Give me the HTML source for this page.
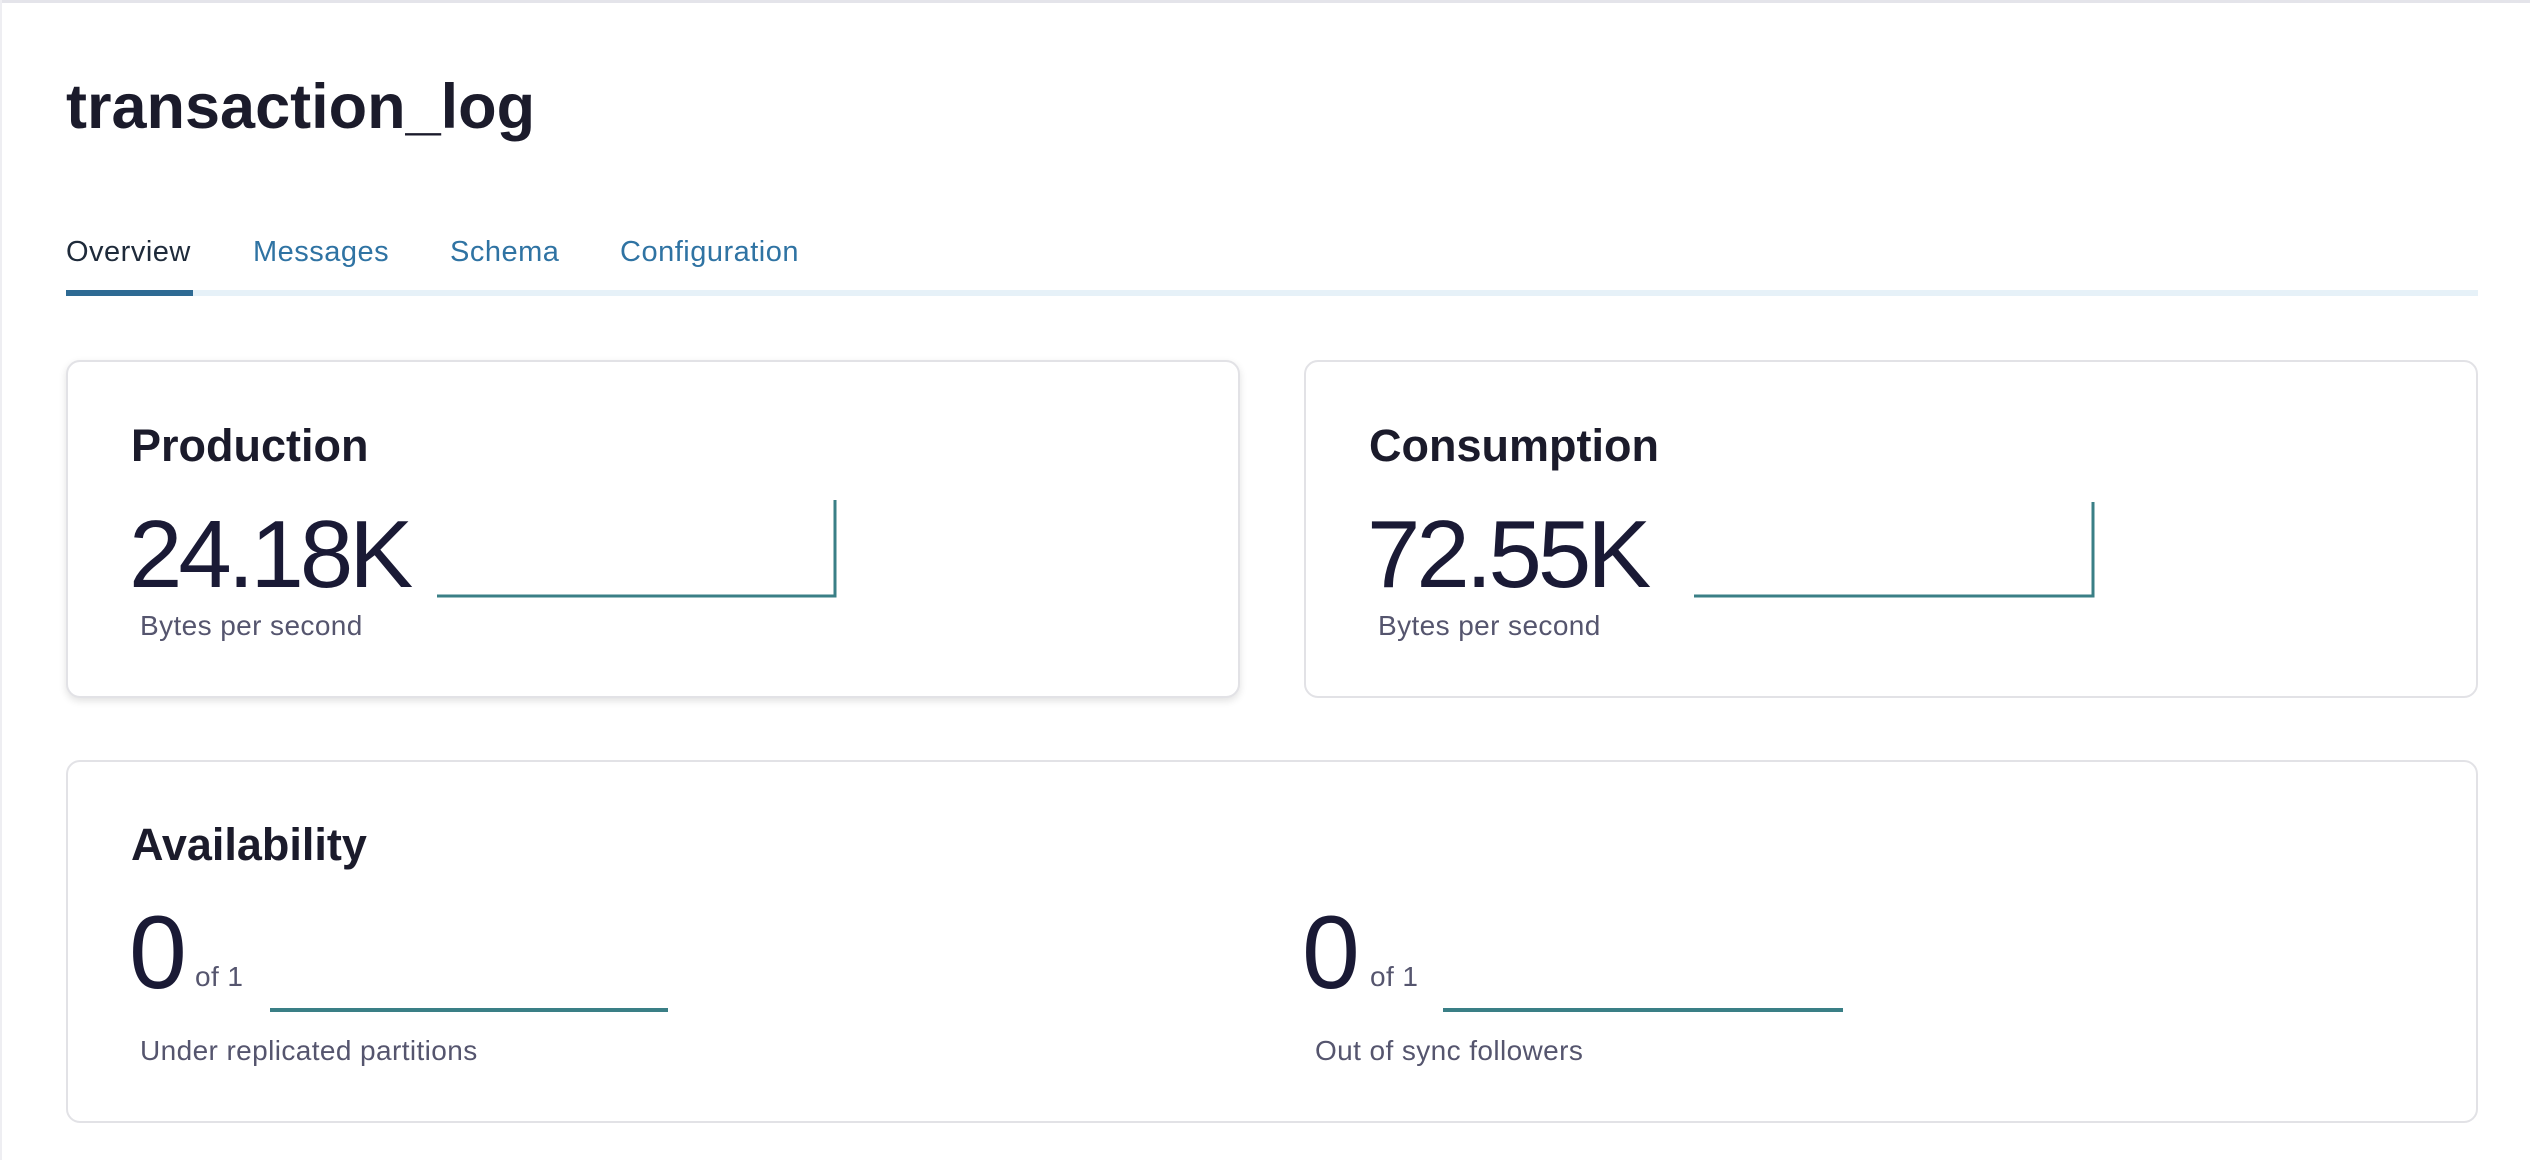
<!DOCTYPE html>
<html><head><meta charset="utf-8"><style>
html,body{margin:0;padding:0;background:#fff;width:2530px;height:1160px;overflow:hidden;position:relative;font-family:"Liberation Sans",sans-serif;}
.a{position:absolute;line-height:1;white-space:nowrap;}
.card{position:absolute;border:2px solid #e2e2e6;border-radius:14px;background:#fff;box-sizing:border-box;}
.h{font-weight:bold;font-size:45px;color:#1b1b2b;}
.big{font-size:96px;color:#1a1a35;font-weight:300;letter-spacing:-4px;}
.lbl{font-size:28px;color:#55556e;letter-spacing:0.4px;}
.tab{font-size:29px;color:#2f73a3;letter-spacing:0.5px;}
</style></head><body>
<div style="position:absolute;left:0;top:0;width:2530px;height:3px;background:#e4e4ea"></div>
<div style="position:absolute;left:0;top:0;width:2px;height:1160px;background:#eeeef2"></div>
<div class="a" style="left:66px;top:76px;font-size:63px;font-weight:bold;color:#1b1b2b">transaction_log</div>
<div class="a tab" style="left:66px;top:238px;color:#1e2a3a">Overview</div>
<div class="a tab" style="left:253px;top:238px">Messages</div>
<div class="a tab" style="left:450px;top:238px">Schema</div>
<div class="a tab" style="left:620px;top:238px">Configuration</div>
<div style="position:absolute;left:66px;top:290px;width:2412px;height:6px;background:#e6f1f8"></div>
<div style="position:absolute;left:66px;top:290px;width:127px;height:6px;background:#2e6a93"></div>

<div class="card" style="left:66px;top:360px;width:1174px;height:338px;box-shadow:0 3px 8px rgba(0,0,0,0.12)"></div>
<div class="card" style="left:1304px;top:360px;width:1174px;height:338px"></div>
<div class="card" style="left:66px;top:760px;width:2412px;height:363px"></div>

<div class="a h" style="left:131px;top:423px">Production</div>
<div class="a big" style="left:129px;top:507px">24.18K</div>
<div class="a lbl" style="left:140px;top:612px">Bytes per second</div>
<div class="a h" style="left:1369px;top:423px">Consumption</div>
<div class="a big" style="left:1367px;top:507px">72.55K</div>
<div class="a lbl" style="left:1378px;top:612px">Bytes per second</div>

<svg style="position:absolute;left:0;top:0" width="2530" height="1160">
<path d="M437 596 L835 596 L835 500" fill="none" stroke="#3a7f86" stroke-width="3"/>
<path d="M1694 596 L2093 596 L2093 502" fill="none" stroke="#3a7f86" stroke-width="3"/>
<path d="M270 1010 L668 1010" stroke="#3a7f86" stroke-width="4"/>
<path d="M1443 1010 L1843 1010" stroke="#3a7f86" stroke-width="4"/>
</svg>

<div class="a h" style="left:131px;top:822px">Availability</div>
<div class="a big" style="left:129px;top:901px;font-size:104px">0</div>
<div class="a lbl" style="left:195px;top:963px">of 1</div>
<div class="a lbl" style="left:140px;top:1037px">Under replicated partitions</div>
<div class="a big" style="left:1302px;top:901px;font-size:104px">0</div>
<div class="a lbl" style="left:1370px;top:963px">of 1</div>
<div class="a lbl" style="left:1315px;top:1037px">Out of sync followers</div>
</body></html>
